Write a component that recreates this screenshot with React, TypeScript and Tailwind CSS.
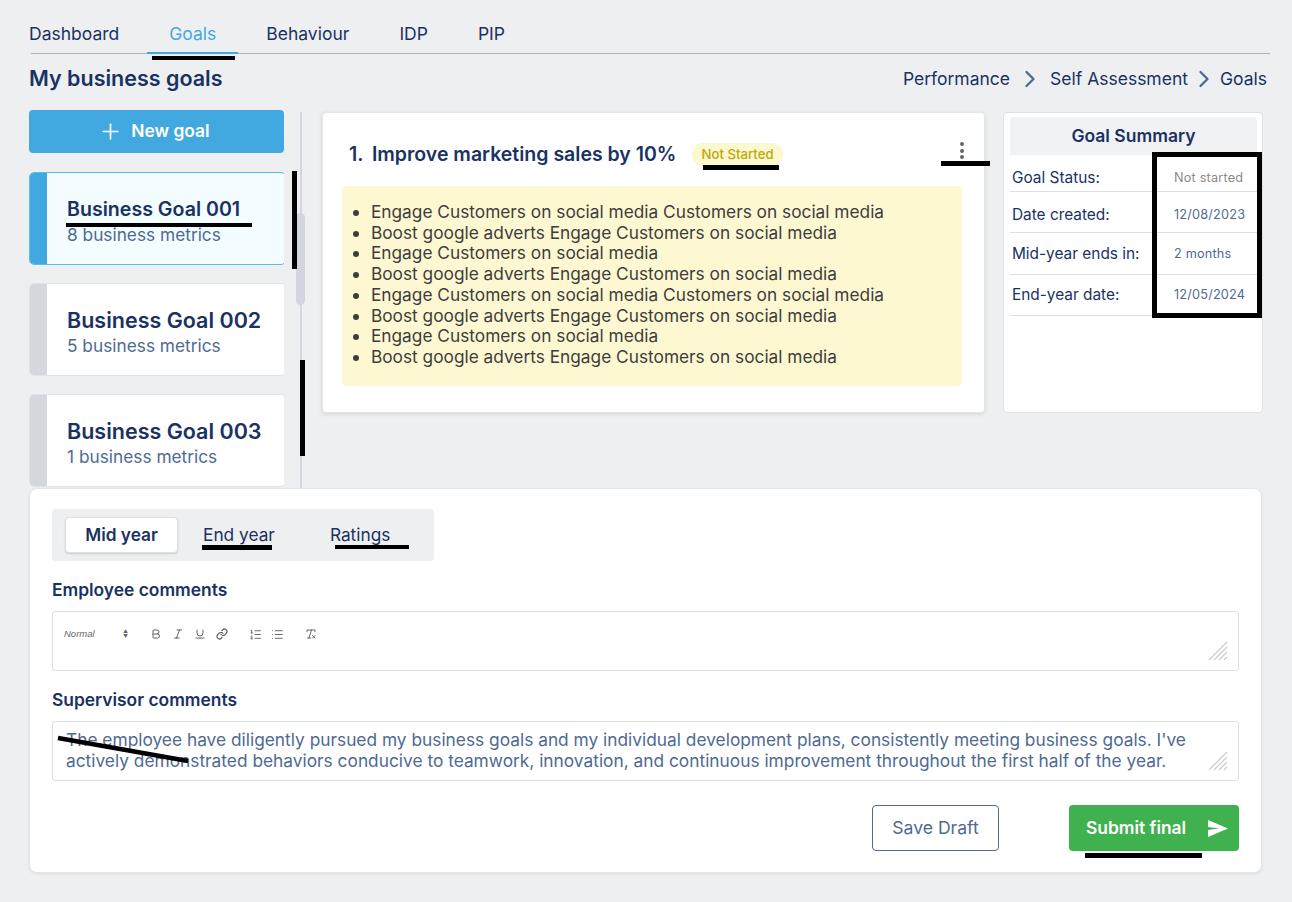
import { Bold, ChevronRight, Italic, Link, List, ListOrdered, Plus, RemoveFormatting, Underline } from 'lucide-react';

const goals = [
  { name: 'Business Goal 001', metrics: '8 business metrics', active: true },
  { name: 'Business Goal 002', metrics: '5 business metrics', active: false },
  { name: 'Business Goal 003', metrics: '1 business metrics', active: false },
];

const bullets = [
  'Engage Customers on social media Customers on social media',
  'Boost google adverts Engage Customers on social media',
  'Engage Customers on social media',
  'Boost google adverts Engage Customers on social media',
  'Engage Customers on social media Customers on social media',
  'Boost google adverts Engage Customers on social media',
  'Engage Customers on social media',
  'Boost google adverts Engage Customers on social media',
];

const summary = [
  { label: 'Goal Status:', value: 'Not started', muted: true, row: 'h-[37px] pt-[9px]' },
  { label: 'Date created:', value: '12/08/2023', muted: false, row: 'h-[41px] pt-[5px]' },
  { label: 'Mid-year ends in:', value: '2 months', muted: false, row: 'h-[42px]' },
  { label: 'End-year date:', value: '12/05/2024', muted: false, row: 'h-[41px]' },
];

function ResizeHandle() {
  return (
    <svg className="absolute right-[10px] bottom-[9px]" width="20" height="20" viewBox="0 0 20 20" stroke="#c9ccd1" strokeWidth="1.2">
      <line x1="1" y1="19" x2="19" y2="1" />
      <line x1="6" y1="19" x2="19" y2="6" />
      <line x1="11" y1="19" x2="19" y2="11" />
      <line x1="16" y1="19" x2="19" y2="16" />
    </svg>
  );
}

function GoalCard({ name, metrics, active }: { name: string; metrics: string; active: boolean }) {
  return (
    <div className={`flex h-[93px] w-[257px] shrink-0 overflow-hidden rounded-[5px] border ${active ? 'border-[#5bbce8] bg-[#f3fcff]' : 'border-[#dfe2e6] bg-white'}`}>
      <div className={`w-[17px] shrink-0 ${active ? 'bg-[#42a9e0]' : 'bg-[#d4d8dc]'}`} />
      <div className="flex flex-col justify-center pl-[20px] pt-[4px]">
        <div className={`${active ? 'text-[19.6px]' : 'text-[21.5px]'} leading-[28px] font-semibold text-[#1a3263]`}>{name}</div>
        <div className="text-[17.3px] leading-[24px] text-[#4f6a92]">{metrics}</div>
      </div>
    </div>
  );
}

function Toolbar() {
  return (
    <div className="flex items-center pl-[11px] pt-[15px] text-[#555]">
      <span className="w-[55px] text-[9.5px] leading-[14px] italic text-[#666]" style={{ fontFamily: '"Liberation Sans", sans-serif' }}>Normal</span>
      <span className="flex w-[31px] flex-col items-start pl-[4px] text-[5px] leading-[5px] text-[#666]">
        <span>▲</span>
        <span>▼</span>
      </span>
      <div className="flex items-center gap-[10px]">
        <Bold size={12} strokeWidth={1.8} />
        <Italic size={12} strokeWidth={1.8} />
        <Underline size={12} strokeWidth={1.8} />
        <Link size={12} strokeWidth={2.2} />
      </div>
      <div className="ml-[21px] flex items-center gap-[9px]">
        <ListOrdered size={13} strokeWidth={1.6} />
        <List size={13} strokeWidth={1.6} />
      </div>
      <RemoveFormatting className="ml-[21px]" size={12} strokeWidth={1.8} />
    </div>
  );
}

export default function App() {
  return (
    <div className="relative h-[902px] w-[1292px] overflow-hidden bg-[#eeeff1] text-[#1a3263]" style={{ fontFamily: 'Inter, sans-serif' }}>
      <div className="px-[29px] pt-[21px]">
        <nav className="relative ml-[2px] flex h-[33px] w-[1239px] gap-[50px] border-b border-[#a8b4c6] pt-[2px] text-[17.5px] leading-[21px]">
          <span className="-ml-[2px]">Dashboard</span>
          <span className="relative text-[#42a9e0]">
            Goals
            <span className="absolute -left-[22px] top-[29px] h-[2px] w-[91px] bg-[#42a9e0]" />
          </span>
          <span>Behaviour</span>
          <span>IDP</span>
          <span>PIP</span>
        </nav>
        <div className="mt-[11px] flex h-[28px] w-[1238px] items-center justify-between">
          <h1 className="mb-[2px] text-[21.5px] leading-[26px] font-semibold">My business goals</h1>
          <div className="flex items-center text-[17.5px] leading-[24px]">
            <span>Performance</span>
            <ChevronRight className="mx-[6px] text-[#4f6a92]" size={28} strokeWidth={2} />
            <span>Self Assessment</span>
            <ChevronRight className="mx-[2px] text-[#4f6a92]" size={28} strokeWidth={2} />
            <span>Goals</span>
          </div>
        </div>

        <div className="mt-[17px] flex h-[378px] items-start">
          <div className="flex h-[378px] w-[257px] flex-col overflow-hidden">
            <button className="flex h-[43px] shrink-0 items-center justify-center gap-[8px] rounded-[4px] bg-[#42a9e0] pr-[5px] text-[17.4px] font-semibold text-white">
              <Plus size={25} strokeWidth={1.6} />
              New goal
            </button>
            <div className="mt-[19px] flex flex-col gap-[18px]">
              {goals.map(g => <GoalCard key={g.name} {...g} />)}
            </div>
          </div>
          <div className="relative ml-[12px] mt-[2px] h-[376px] w-[10px]">
            <div className="mx-auto h-full w-[2px] bg-[#d3d6de]" />
            <div className="absolute left-[0px] top-[101px] h-[92px] w-[9px] rounded-[5px] bg-[#d3d6de]" />
          </div>
          <div className="ml-[16px] mt-[2px] h-[301px] w-[668px] rounded-[4px] border border-[#e2e5e9] bg-white pl-[19px] pr-[22px] shadow-[0_1px_4px_rgba(0,0,0,0.12)]">
            <div className="relative flex h-[73px] items-center pl-[7px] pt-[10px]">
              <span className="w-[23px] text-[19.5px] font-semibold">1.</span>
              <span className="text-[19.5px] font-semibold">Improve marketing sales by 10%</span>
              <span className="ml-[16px] rounded-full bg-[#fcf8cf] px-[9px] py-[2px] text-[13.2px] leading-[19px] font-medium text-[#bda80a]">Not Started</span>
              <div className="absolute -right-[2px] top-[29px] flex flex-col gap-[2.5px]">
                <span className="h-[4px] w-[4px] rounded-full bg-[#666]" />
                <span className="h-[4px] w-[4px] rounded-full bg-[#666]" />
                <span className="h-[4px] w-[4px] rounded-full bg-[#666]" />
              </div>
            </div>
            <ul className="h-[200px] list-disc rounded-[4px] bg-[#fdf8d2] pl-[29px] pt-[16px] text-[17.3px] leading-[20.7px] text-[#3d3d3d]">
              {bullets.map((b, i) => <li key={i}>{b}</li>)}
            </ul>
          </div>
          <div className="ml-[18px] mt-[2px] h-[301px] w-[262px] rounded-[4px] border border-[#dfe2e6] bg-white pl-[6px] pr-[5px] pt-[4px]">
            <div className="flex h-[38px] items-center justify-center rounded-t-[4px] bg-[#f1f2f3] text-[17.5px] font-semibold">Goal Summary</div>
            {summary.map(s => (
              <div key={s.label} className={`flex items-center border-b border-[#dcdfe3] text-[15.4px] ${s.row}`}>
                <span className="w-[164px] pl-[2px]">{s.label}</span>
                <span className={`text-[12.7px] tracking-[0.2px] ${s.muted ? 'text-[#8a8a8a]' : 'text-[#4f6a92]'}`}>{s.value}</span>
              </div>
            ))}
          </div>
        </div>

        <div className="h-[385px] w-[1233px] rounded-[8px] border border-[#e3e5e8] bg-white px-[22px] pt-[20px] shadow-[0_1px_3px_rgba(0,0,0,0.08)]">
          <div className="flex h-[52px] w-[382px] items-center rounded-[4px] bg-[#eeeff1] pl-[13px] text-[17.3px]">
            <span className="flex h-[36px] w-[113px] items-center justify-center rounded-[4px] border border-[#dcdfe3] bg-white font-semibold shadow-[0_1px_2px_rgba(0,0,0,0.15)]">Mid year</span>
            <span className="ml-[25px]">End year</span>
            <span className="ml-[55px]">Ratings</span>
          </div>
          <div className="mt-[18px] text-[17.4px] leading-[21px] font-semibold">Employee comments</div>
          <div className="relative mt-[11px] h-[60px] w-[1187px] rounded-[3px] border border-[#dcdfe3] bg-white">
            <Toolbar />
            <ResizeHandle />
          </div>
          <div className="mt-[18px] text-[17.4px] leading-[21px] font-semibold">Supervisor comments</div>
          <div className="relative mt-[11px] h-[60px] w-[1187px] rounded-[3px] border border-[#dcdfe3] bg-white pl-[13px] pt-[8px] text-[17.32px] leading-[20.5px] text-[#4f6a92]">
            The employee have diligently pursued my business goals and my individual development plans, consistently meeting business goals. I've<br />
            actively demonstrated behaviors conducive to teamwork, innovation, and continuous improvement throughout the first half of the year.
            <ResizeHandle />
          </div>
          <div className="mt-[24px] flex w-[1187px] items-center justify-end gap-[70px]">
            <button className="h-[46px] w-[127px] rounded-[4px] border border-[#4f6a92] bg-white text-[17.6px] text-[#4f6a92]">Save Draft</button>
            <button className="flex h-[46px] w-[170px] items-center justify-between rounded-[4px] bg-[#3fb14e] pl-[17px] pr-[11px] text-[17.4px] font-semibold text-white">
              Submit final
              <svg width="20" height="17" viewBox="0 0 20 17" fill="white">
                <path d="M0 0 L20 8.5 L0 17 L0 10 L11 8.5 L0 7 Z" />
              </svg>
            </button>
          </div>
        </div>
      </div>

      {/* black redaction marks drawn over the screenshot */}
      <div className="absolute left-[152px] top-[56px] h-[4px] w-[83px] bg-black" />
      <div className="absolute left-[66px] top-[223px] h-[4px] w-[186px] bg-black" />
      <div className="absolute left-[292px] top-[171px] h-[98px] w-[5px] bg-black" />
      <div className="absolute left-[300px] top-[360px] h-[96px] w-[5px] bg-black" />
      <div className="absolute left-[703px] top-[165px] h-[5px] w-[76px] bg-black" />
      <div className="absolute left-[941px] top-[161px] h-[5px] w-[49px] bg-black" />
      <div className="absolute left-[1152px] top-[152px] h-[166px] w-[110px] border-[5px] border-black" />
      <div className="absolute left-[202px] top-[545px] h-[5px] w-[70px] bg-black" />
      <div className="absolute left-[335px] top-[545px] h-[4px] w-[74px] bg-black" />
      <div className="absolute left-[1085px] top-[853px] h-[5px] w-[117px] bg-black" />
      <svg className="absolute left-[56px] top-[735px]" width="134" height="30" viewBox="0 0 134 30">
        <line x1="2" y1="3" x2="132" y2="26" stroke="black" strokeWidth="4.5" />
      </svg>
    </div>
  );
}
